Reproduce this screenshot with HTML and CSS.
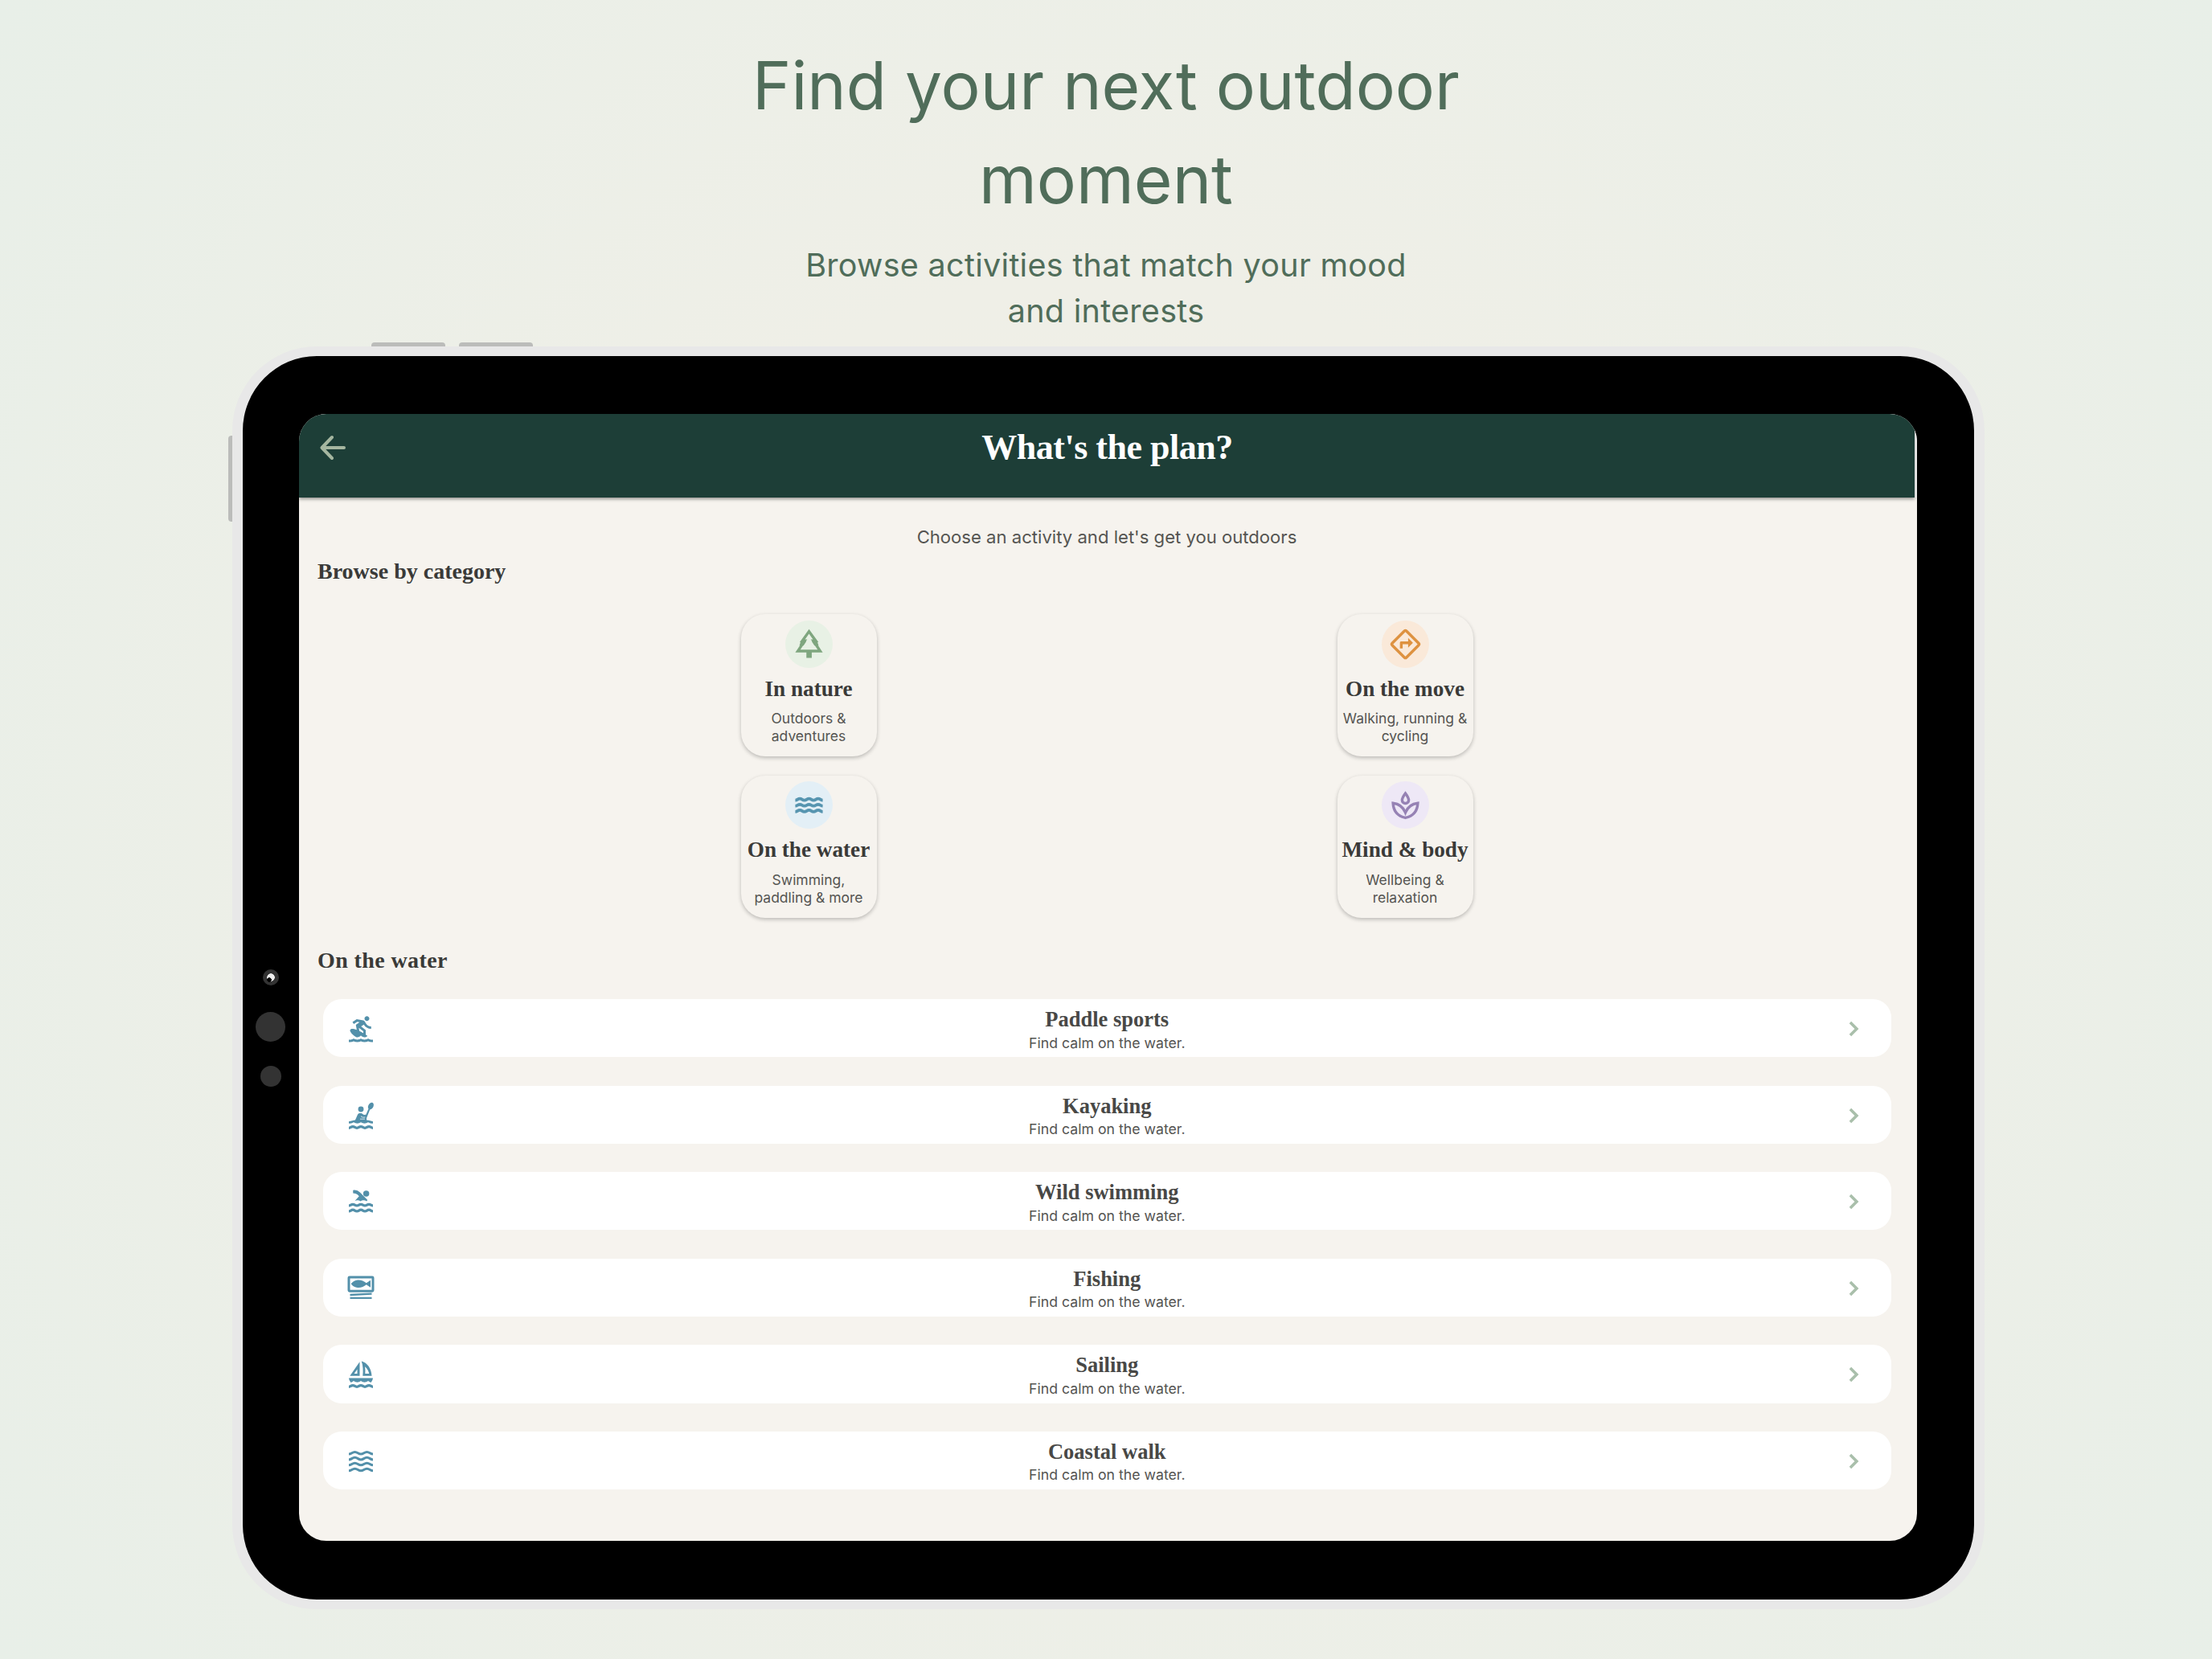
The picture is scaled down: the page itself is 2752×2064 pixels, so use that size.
FILE: index.html
```html
<!DOCTYPE html>
<html lang="en">

<head>
    <meta charset="UTF-8">
    <title>Find your next outdoor moment</title>
    <link rel="stylesheet" href="styles.css">
</head>

<body>
    <!-- shared icons -->
    <svg class="defs" width="0" height="0">
        <symbol id="wave" viewBox="0 0 24 24" overflow="visible">
            <path d="M2 0c1.600 0 1.700-1.100 3.330-1.100S7 0 8.670 0s1.700-1.100 3.330-1.100S13.700 0 15.330 0s1.700-1.100 3.340-1.100S20.400 0 22 0" fill="none" stroke="currentColor" stroke-width="2.200" />
        </symbol>
        <symbol id="swell" viewBox="0 0 24 24" overflow="visible">
            <path d="M2 0c2.300 0 2.700-1.700 5-1.700S9.700 0 12 0s2.700-1.700 5-1.700S19.700 0 22 0" fill="none" stroke="currentColor" stroke-width="2" />
        </symbol>
        <symbol id="chevron" viewBox="0 0 24 24">
            <path d="M9.300 6.700l5.300 5.300-5.300 5.300" fill="none" stroke="currentColor" stroke-width="2.400" />
        </symbol>
    </svg>

    <div class="caption">
        <h1>Find your next outdoor<br>moment</h1>
        <p>Browse activities that match your mood<br>and interests</p>
    </div>

    <div class="device">
        <!-- hardware buttons -->
        <i class="key key-up"></i>
        <i class="key key-down"></i>
        <i class="key key-power"></i>

        <div class="sensors">
            <i class="camera"></i>
            <i class="lens"></i>
            <i class="light"></i>
        </div>

        <div class="screen">
            <div class="topbar">
                <svg class="back" viewBox="0 0 32 32"><path d="M30 16H3M15 3L2.500 16 15 29" /></svg>
                <h2>What's the plan?</h2>
            </div>

            <div class="content">
                <p class="intro">Choose an activity and let's get you outdoors</p>
                <h3>Browse by category</h3>

                <div class="cards">
                    <div class="card">
                        <div class="circle green">
                            <svg viewBox="0 0 24 24"><path d="M12 1L5.200 10.500h1.800L2 18h8.100v4h3.900v-4H22l-5-7.500h1.900zM5.700 16l5-7.500H9.100L12 4.400l2.900 4.100h-1.600l5 7.500z" fill="currentColor" fill-rule="evenodd" /><path d="M6 10h4L8 13H5zM18 10h-4l2 3h3z" fill="currentColor" /></svg>
                        </div>
                        <h4>In nature</h4>
                        <p>Outdoors &amp;<br>adventures</p>
                    </div>
                    <div class="card">
                        <div class="circle orange">
                            <svg viewBox="0 0 24 24"><rect x="4.700" y="4.700" width="14.600" height="14.600" rx="1" transform="rotate(45 12 12)" fill="none" stroke="currentColor" stroke-width="2" /><path d="M8 15v-4c0-.6.4-1 1-1h5V7.500l3.500 3.500-3.500 3.500V12h-4v3z" fill="currentColor" /></svg>
                        </div>
                        <h4>On the move</h4>
                        <p>Walking, running &amp;<br>cycling</p>
                    </div>
                    <div class="card">
                        <div class="circle blue">
                            <svg viewBox="0 0 24 24"><use href="#wave" y="8.500" width="24" height="24" /><use href="#wave" y="12.700" width="24" height="24" /><use href="#wave" y="16.900" width="24" height="24" /></svg>
                        </div>
                        <h4>On the water</h4>
                        <p>Swimming,<br>paddling &amp; more</p>
                    </div>
                    <div class="card">
                        <div class="circle purple">
                            <svg viewBox="0 0 24 24"><path d="M12 3.500c-1.500 2-2.400 3.600-2.400 5 0 1.300 1 2.300 2.400 2.300s2.400-1 2.400-2.300c0-1.400-.9-3-2.400-5zM12 17.500c-1.500-3.600-4.700-6.300-9-6.800.3 5.700 3.500 9.500 9 10.600 5.500-1.100 8.700-4.900 9-10.600-4.300.5-7.500 3.200-9 6.800z" fill="none" stroke="currentColor" stroke-width="2" /></svg>
                        </div>
                        <h4>Mind &amp; body</h4>
                        <p>Wellbeing &amp;<br>relaxation</p>
                    </div>
                </div>

                <h3 class="second">On the water</h3>

                <div class="list">
                    <div class="row">
                        <svg viewBox="0 0 24 24"><path fill="currentColor" d="M21 23c-1.030 0-2.060-.25-3-.75-1.890 1-4.110 1-6 0-1.890 1-4.110 1-6 0-.95.5-1.970.75-3 .75H2v-2h1c1.040 0 2.080-.35 3-1 1.830 1.300 4.170 1.300 6 0 1.830 1.300 4.170 1.300 6 0 .91.65 1.960 1 3 1h1v2zM17 1.500c-1.100 0-2 .9-2 2s.9 2 2 2 2-.9 2-2-.9-2-2-2zm-2.570 6.980L12.180 10 16 13v3.840c.53.38 1.030.78 1.490 1.170-.68.58-1.550.99-2.490.99-1.200 0-2.270-.66-3-1.500-.73.84-1.800 1.500-3 1.500-.33 0-.65-.05-.96-.14C5.190 16.900 3 14.720 3 13.280 3 12.250 4.010 12 4.850 12c.98 0 2.280.31 3.700.83l-.72-4.240 3.120-2.100-2-.37-2.820 1.930L5 6.400 8.500 4l5.550 1.030c.45.09.93.37 1.220.89l.88 1.550C17.010 8.980 18.640 10 20.500 10v2c-2.590 0-4.860-1.400-6.070-3.520zM10.300 11.100l.44 2.650c.92.42 2.480 1.270 3.260 1.750V14z" /></svg>
                        <div class="text">
                            <h4>Paddle sports</h4>
                            <p>Find calm on the water.</p>
                        </div>
                        <svg class="next"><use href="#chevron" /></svg>
                    </div>
                    <div class="row">
                        <svg viewBox="0 0 24 24">
                            <circle cx="12" cy="6.700" r="2.300" fill="currentColor" />
                            <path d="M2 18.500v-1.600c2-.6 4-1 5.300-1.300l2-4.400c.3-.8 1-1.200 1.900-1.200h1.300l2 1.400 1.700-.3 2.100-4.700c-.8-1.300-.4-3 .6-4.100.9-1 2.200-1.300 2.900-.9.8.4 1 1.700.6 3-.5 1.400-1.700 2.500-2.900 2.600L16.700 14v1.600c2 .2 4 .8 5.300 1.300v1.600c-1.500 0-2.600-.3-4-1-1.900 1.300-4.100 1.300-6 0-1.900 1.300-4.100 1.300-6 0-1.400.7-2.500 1-4 1z" fill="currentColor" />
                            <path d="M12 12.600l1.500.8h2M11.300 14.800h4" fill="none" stroke="#fff" stroke-width=".5" />
                            <use href="#wave" y="22.200" width="24" height="24" />
                        </svg>
                        <div class="text">
                            <h4>Kayaking</h4>
                            <p>Find calm on the water.</p>
                        </div>
                        <svg class="next"><use href="#chevron" /></svg>
                    </div>
                    <div class="row">
                        <svg viewBox="0 0 24 24">
                            <circle cx="16.400" cy="5.300" r="2.500" fill="currentColor" />
                            <path d="M5.500 2.500q3.500-.5 5.800 1.800L17.500 10.700l-.8 1q-1.300-.9-2.500-.9-1.400 0-2.500.9-1.200-.9-2.500-.9-1.200 0-2.200.6L10.500 7.500 9.200 6.200q-1.200-1.200-3.700-1.200z" fill="currentColor" />
                            <use href="#wave" y="15.300" width="24" height="24" /><use href="#wave" y="19.900" width="24" height="24" />
                        </svg>
                        <div class="text">
                            <h4>Wild swimming</h4>
                            <p>Find calm on the water.</p>
                        </div>
                        <svg class="next"><use href="#chevron" /></svg>
                    </div>
                    <div class="row">
                        <svg viewBox="0 0 24 24">
                            <rect x="2" y="2.600" width="20" height="11.500" rx=".6" fill="none" stroke="currentColor" stroke-width="2" />
                            <path d="M3.800 8.200c2-2.600 4.200-3.200 6.300-3.200 2.500 0 4.500.9 6.400 2.500l3.500-2.300v6l-3.500-2.300c-1.900 1.600-3.900 2.500-6.400 2.500-2.100 0-4.300-.6-6.300-3.200z" fill="currentColor" />
                            <path d="M3 17.300l18-.9M3 19.900h18" fill="none" stroke="currentColor" stroke-width="1.600" />
                        </svg>
                        <div class="text">
                            <h4>Fishing</h4>
                            <p>Find calm on the water.</p>
                        </div>
                        <svg class="next"><use href="#chevron" /></svg>
                    </div>
                    <div class="row">
                        <svg viewBox="0 0 24 24">
                            <path d="M11 1.500v11.700H2.900zM9 7.700l-2.600 3.700H9zM12.500 1c4.800 1.200 8.200 6 8.500 12.200h-7.500c.5-4 .3-8.500-1-12.200zM15.300 5.500c.4 2 .4 4 .2 5.900h3.300c-.4-2.300-1.600-4.400-3.500-5.900z" fill="currentColor" fill-rule="evenodd" />
                            <path d="M2 15h20c-.2 1.500-.8 2.700-1.700 3.600-.8-.2-1.500-.6-2.300-1.200-1.900 1.400-4.100 1.400-6 0-1.900 1.400-4.100 1.400-6 0-.7.6-1.500 1-2.300 1.200C2.800 17.700 2.200 16.500 2 15z" fill="currentColor" />
                            <use href="#wave" y="22.200" width="24" height="24" />
                        </svg>
                        <div class="text">
                            <h4>Sailing</h4>
                            <p>Find calm on the water.</p>
                        </div>
                        <svg class="next"><use href="#chevron" /></svg>
                    </div>
                    <div class="row">
                        <svg viewBox="0 0 24 24"><use href="#swell" y="6" width="24" height="24" /><use href="#swell" y="10.600" width="24" height="24" /><use href="#swell" y="15.200" width="24" height="24" /><use href="#swell" y="19.800" width="24" height="24" /></svg>
                        <div class="text">
                            <h4>Coastal walk</h4>
                            <p>Find calm on the water.</p>
                        </div>
                        <svg class="next"><use href="#chevron" /></svg>
                    </div>
                </div>
            </div>
        </div>
    </div>
</body>

</html>
```
FILE: styles.css
```css
* {
    margin: 0;
    padding: 0;
    box-sizing: border-box;
}

body {
    height: 2064px;
    padding-top: 48px;
    overflow: hidden;
    background: radial-gradient(circle at 50% 50%, #f0efe6 0%, #efefe7 40%, #e8efe8 100%);
}

.defs {
    position: absolute;
}

/* caption above the tablet */
.caption {
    color: #506d5a;
    font-family: Inter, "Liberation Sans", sans-serif;
    text-align: center;
}

.caption h1 {
    font-size: 82px;
    font-weight: 400;
    line-height: 117px;
}

.caption p {
    margin-top: 20px;
    font-size: 39.5px;
    line-height: 57px;
    letter-spacing: 0.3px;
}

/* tablet */
.device {
    position: relative;
    display: flex;
    width: 2180px;
    height: 1571px;
    margin: 15px 0 0 289px;
    padding: 72px 70px 73px 70px;
    border: solid #e8e8e8;
    border-width: 12px 13px;
    border-radius: 105px;
    background: #000;
}

.key {
    position: absolute;
    background: #bbbcba;
}

.key-up,
.key-down {
    top: -17px;
    width: 92px;
    height: 5px;
    border-radius: 4px 4px 0 0;
}

.key-up {
    left: 160px;
}

.key-down {
    left: 269px;
}

.key-power {
    top: 99px;
    left: -18px;
    width: 5px;
    height: 107px;
    border-radius: 4px 0 0 4px;
}

.sensors {
    position: absolute;
    top: 763px;
    left: 16px;
    display: flex;
    flex-direction: column;
    align-items: center;
    width: 37px;
}

.sensors i {
    border-radius: 50%;
    background: #333;
}

.sensors .camera {
    width: 20px;
    height: 20px;
    background: radial-gradient(circle at 8px 13px, #000 2.500px, transparent 3px), radial-gradient(circle at 10px 10px, #eee 4.500px, #333 5px);
}

.sensors .lens {
    width: 37px;
    height: 37px;
    margin: 33px 0 30px;
}

.sensors .light {
    width: 26px;
    height: 26px;
}

.screen {
    width: 2012.5px;
    height: 1401.5px;
    border-radius: 34px;
    background: #f6f3ee;
    overflow: hidden;
    color: #3a3a38;
}

h2,
h3,
h4 {
    font-family: "Liberation Serif", serif;
    font-weight: 700;
}

.screen p {
    font-family: Inter, "Liberation Sans", sans-serif;
    text-align: center;
    color: #555552;
}

.topbar {
    display: grid;
    grid-template-columns: 32px 1fr 32px;
    align-items: center;
    width: 2009.5px;
    height: 104px;
    padding: 0 24px 20px 25.5px;
    background: #1d3e37;
    box-shadow: 0 2px 4px rgba(0, 0, 0, 0.4), 4px 0 0 #fafafa;
}

.back {
    width: 32px;
    height: 32px;
    fill: none;
    stroke: #a5b6a0;
    stroke-width: 4;
    stroke-linecap: round;
    stroke-linejoin: round;
}

.topbar h2 {
    color: #fff;
    font-size: 44px;
    line-height: 84px;
    letter-spacing: -0.5px;
    text-align: center;
}

.content {
    width: 2010px;
    padding-top: 34px;
}

.content .intro {
    font-size: 22.1px;
    line-height: 30px;
}

h3 {
    margin: 10px 0 0 23px;
    font-size: 28px;
    line-height: 36px;
}

h3.second {
    margin-top: 35.5px;
    letter-spacing: 0.4px;
}

/* category cards, two per line */
.cards {
    display: grid;
    grid-template-columns: 169px 169px;
    column-gap: 573px;
    row-gap: 23.5px;
    justify-content: center;
    margin-top: 35px;
}

.card {
    display: flex;
    flex-direction: column;
    align-items: center;
    height: 177px;
    padding-top: 7.5px;
    border-radius: 30px;
    background: #f6f3ee;
    box-shadow: 0 2px 5px rgba(0, 0, 0, 0.24);
    white-space: nowrap;
}

.circle {
    display: flex;
    align-items: center;
    justify-content: center;
    width: 59px;
    height: 59px;
    border-radius: 50%;
}

.circle svg {
    width: 41px;
    height: 41px;
}

.green {
    background: #e8f1e5;
    color: #7fa67f;
}

.orange {
    background: #fae9d9;
    color: #de9240;
}

.blue {
    background: #e3eff6;
    color: #5795b0;
}

.purple {
    background: #eee8f6;
    color: #9682b4;
}

.card h4 {
    margin-top: 11px;
    font-size: 27.2px;
    line-height: 30px;
}

.card p {
    margin-top: 11.5px;
    font-size: 17.5px;
    line-height: 22px;
}

/* activity list */
.list {
    display: flex;
    flex-direction: column;
    gap: 35.3px;
    width: 1951.5px;
    margin: 30px 0 0 29.5px;
}

.row {
    display: grid;
    grid-template-columns: 36px 1fr 36px;
    align-items: start;
    height: 72.3px;
    padding: 0 29.5px;
    border-radius: 23px;
    background: #fff;
}

.row svg {
    width: 36px;
    height: 36px;
    margin-top: 19px;
    color: #5390aa;
}

.row .next {
    color: #a9bfab;
}

.text {
    padding-top: 11px;
    text-align: center;
}

.text h4 {
    color: #484846;
    font-size: 26.5px;
    line-height: 28px;
}

.text p {
    margin-top: 4.5px;
    font-size: 17.7px;
    line-height: 22px;
}
```
